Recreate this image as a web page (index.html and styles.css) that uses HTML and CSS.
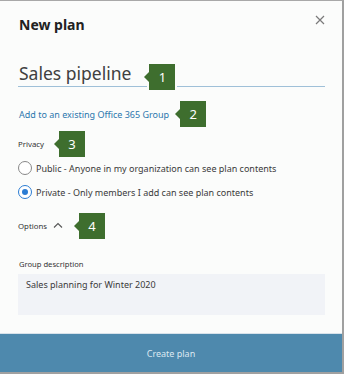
FILE: index.html
```html
<!DOCTYPE html>
<html>
<head>
<meta charset="utf-8">
<link rel="stylesheet" href="styles.css">
</head>
<body>
<div class="dialog">
  <div class="content">
    <div class="head">
      <h1 class="title">New plan</h1>
      <span class="close"><svg width="10" height="10" viewBox="0 0 10 10"><path d="M1 1L9 9M9 1L1 9" stroke="#7a7a7a" stroke-width="1.2" fill="none"/></svg></span>
    </div>
    <div class="name-field">
      <span class="name-text">Sales pipeline</span>
      <span class="badge badge-1">1</span>
    </div>
    <div class="row link-row">
      <a class="link">Add to an existing Office 365 Group</a>
      <span class="badge badge-2">2</span>
    </div>
    <div class="row privacy-row">
      <span class="label">Privacy</span>
      <span class="badge badge-3">3</span>
    </div>
    <div class="radio-row radio-public">
      <span class="radio"></span>
      <span class="radio-text">Public - Anyone in my organization can see plan contents</span>
    </div>
    <div class="radio-row radio-private">
      <span class="radio checked"></span>
      <span class="radio-text">Private - Only members I add can see plan contents</span>
    </div>
    <div class="row options-row">
      <span class="label">Options</span>
      <svg class="chevron" width="10" height="6" viewBox="0 0 10 6"><path d="M1 5.5L5 1.5L9 5.5" stroke="#555" stroke-width="1.1" fill="none"/></svg>
      <span class="badge badge-4">4</span>
    </div>
    <div class="desc-label">Group description</div>
    <div class="desc-box">Sales planning for Winter 2020</div>
  </div>
  <div class="footer">Create plan</div>
</div>
</body>
</html>
```
FILE: styles.css
```css
html, body {
  margin: 0;
  padding: 0;
  background: #fbfcfb;
}
body {
  font-family: "Noto Sans", "Open Sans", sans-serif;
  color: #333;
}
.dialog {
  width: 342px;
  height: 371px;
  border-top: 1px solid #a8a8a8;
  border-right: 2px solid #a0a0a0;
  border-bottom: 2px solid #a0a0a0;
  background: #fbfcfb;
  display: flex;
  flex-direction: column;
}
.content {
  flex: 1;
  padding: 0 17px 0 18px;
  display: flex;
  flex-direction: column;
}
.head {
  display: flex;
  justify-content: space-between;
  align-items: flex-start;
  height: 48px;
}
.title {
  margin: 0;
  margin-top: 14px;
  margin-left: 1px;
  font-size: 14px;
  font-weight: 700;
  color: #222;
  line-height: 20px;
}
.close {
  margin-top: 14px;
  display: flex;
}
.name-field {
  display: flex;
  align-items: flex-end;
  height: 37px;
  border-bottom: 1px solid #9fc0d8;
  padding-left: 1px;
}
.name-text {
  font-size: 17.5px;
  line-height: 24px;
  color: #404040;
  margin-bottom: 1px;
}
.badge {
  position: relative;
  width: 26px;
  height: 26px;
  background: #3e6e2e;
  color: #fff;
  font-size: 13px;
  display: flex;
  align-items: center;
  justify-content: center;
  flex: none;
}
.badge::before {
  content: "";
  position: absolute;
  left: -5px;
  top: 8px;
  border-top: 5px solid transparent;
  border-bottom: 5px solid transparent;
  border-right: 5px solid #3e6e2e;
}
.badge-1 {
  margin-left: 18px;
  margin-bottom: -4px;
  box-shadow: 0 0 0 2px #fbfcfb;
}
.row {
  display: flex;
  align-items: center;
}
.link-row {
  margin-top: 14px;
  height: 26px;
  padding-left: 1px;
}
.link {
  font-size: 9px;
  color: #2b77ad;
}
.badge-2 {
  margin-left: 11px;
}
.privacy-row {
  margin-top: 4px;
  height: 26px;
}
.label {
  font-size: 7.8px;
  color: #333;
}
.badge-3 {
  margin-left: 15px;
}
.radio-row {
  display: flex;
  align-items: center;
  height: 24px;
}
.radio-public {
  margin-top: -1px;
}
.radio-private {
  margin-top: 0;
}
.radio {
  width: 12px;
  height: 12px;
  border: 1px solid #888;
  border-radius: 50%;
  background: #fff;
  margin-right: 4px;
  position: relative;
  flex: none;
}
.radio.checked {
  border-color: #2b7cd3;
}
.radio.checked::after {
  content: "";
  position: absolute;
  left: 3px;
  top: 3px;
  width: 6px;
  height: 6px;
  border-radius: 50%;
  background: #2b7cd3;
}
.radio-text {
  font-size: 9px;
  color: #3a3a3a;
}
.options-row {
  margin-top: 9px;
  height: 26px;
}
.chevron {
  margin-left: 6px;
  margin-bottom: 2px;
}
.badge-4 {
  margin-left: 16px;
}
.desc-label {
  margin-top: 19px;
  font-size: 7.6px;
  color: #333;
  padding-left: 1px;
  line-height: 12px;
}
.desc-box {
  margin-top: 4px;
  height: 41px;
  background: #f1f3f7;
  font-size: 9px;
  color: #3a3a3a;
  padding: 4px 8px;
  box-sizing: border-box;
  width: 307px;
}
.footer {
  height: 38px;
  flex: none;
  background: #4e89ad;
  color: #dce8f1;
  font-size: 9px;
  display: flex;
  align-items: center;
  justify-content: center;
  border-top: 1px solid #d8e2ea;
}
```
